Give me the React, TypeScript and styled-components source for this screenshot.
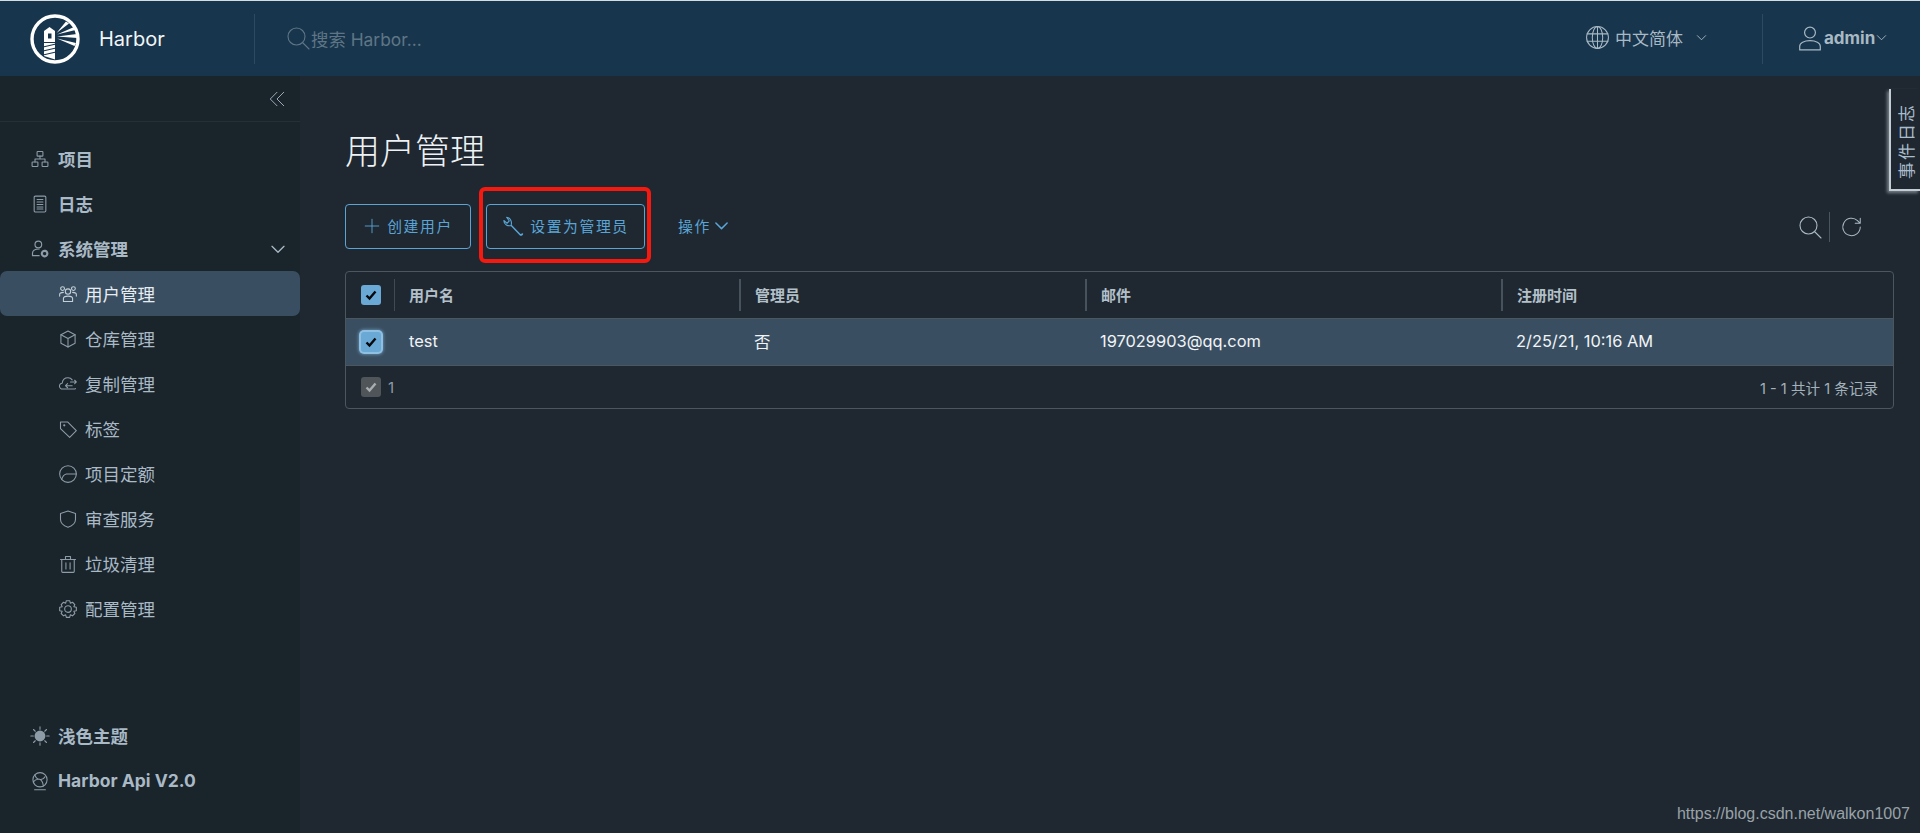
import styled, { createGlobalStyle } from 'styled-components'
import type { ReactNode } from 'react'

const GlobalStyle = createGlobalStyle`
  html, body {
    margin: 0;
    padding: 0;
    height: 100%;
    background: #1f2831;
  }
  * {
    box-sizing: border-box;
  }
  body {
    font-family: Inter, 'Noto Sans CJK SC', sans-serif;
    overflow: hidden;
  }
`

const Page = styled.div`
  width: 1920px;
  height: 833px;
  position: relative;
  display: flex;
  flex-direction: column;
  overflow: hidden;
  border-top: 1px solid #d8dcde;
`
const Header = styled.header`
  height: 75px;
  flex: none;
  display: flex;
  align-items: center;
  background: #17354c;
`
const Brand = styled.div`
  width: 255px;
  height: 50px;
  display: flex;
  align-items: center;
  gap: 19px;
  padding-left: 30px;
  border-right: 1px solid #2c4a60;
  font-size: 20px;
  color: #f2f6f8;
`
const SearchBox = styled.div`
  flex: 1;
  display: flex;
  align-items: center;
  gap: 1px;
  padding-left: 31px;
  padding-bottom: 1px;
  font-size: 17.4px;
  color: #5f7586;
`
const LangMenu = styled.div`
  width: 177px;
  height: 50px;
  display: flex;
  align-items: center;
  gap: 5px;
  padding-bottom: 2px;
  font-size: 17px;
  color: #a9b9c4;
`
const LangCaret = styled.span`
  margin-left: 8px;
  display: flex;
`
const UserMenu = styled.div`
  width: 158px;
  height: 50px;
  display: flex;
  align-items: center;
  gap: 1px;
  padding-left: 34px;
  padding-bottom: 2px;
  border-left: 1px solid #2c4a60;
  font-size: 17px;
  font-weight: 700;
  color: #a9b9c4;
`
const Body = styled.div`
  flex: 1;
  display: flex;
  min-height: 0;
`
const Sidebar = styled.aside`
  width: 300px;
  flex: none;
  display: flex;
  flex-direction: column;
  background: #1a242b;
  padding-bottom: 30px;
`
const CollapseRow = styled.div`
  height: 46px;
  flex: none;
  display: flex;
  justify-content: flex-end;
  align-items: center;
  padding-right: 14px;
  border-bottom: 1px solid #262f36;
  color: #a9b9c4;
`
const NavList = styled.nav`
  flex: 1;
  padding-top: 14px;
`
const NavItem = styled.div<{ $sub?: boolean; $active?: boolean; $bold?: boolean }>`
  height: 45px;
  display: flex;
  align-items: center;
  gap: ${({ $sub }) => ($sub ? '7px' : '8px')};
  padding-left: ${({ $sub }) => ($sub ? '58px' : '30px')};
  padding-right: 14px;
  font-size: 17.5px;
  font-weight: ${({ $bold }) => ($bold ? 700 : 400)};
  color: ${({ $active }) => ($active ? '#e6edf2' : '#a9b9c6')};
  background: ${({ $active }) => ($active ? '#3a4e61' : 'transparent')};
  border-radius: ${({ $active }) => ($active ? '7px' : '0')};
  svg {
    flex: none;
    color: ${({ $active }) => ($active ? '#c4d0d8' : '#8d9ca7')};
  }
`
const NavCaret = styled.span`
  margin-left: auto;
  display: flex;
  svg {
    color: #a9b9c4;
  }
`
const Main = styled.main`
  flex: 1;
  min-width: 0;
  padding: 0 26px 0 45px;
`
const Title = styled.h1`
  margin: 47px 0 0;
  height: 56px;
  font-size: 35px;
  line-height: 56px;
  font-weight: 300;
  color: #eef2f5;
`
const Toolbar = styled.div`
  display: flex;
  align-items: center;
  gap: 15px;
  margin-top: 25px;
  height: 45px;
`
const ActionButton = styled.button<{ $width: number }>`
  width: ${({ $width }) => $width}px;
  height: 45px;
  display: flex;
  align-items: center;
  justify-content: center;
  gap: 6px;
  padding: 0 0 2px;
  background: transparent;
  border: 1px solid #5aa5d6;
  border-radius: 4px;
  font-family: inherit;
  font-size: 14.8px;
  letter-spacing: 1.6px;
  color: #5aa5d6;
`
const PlainAction = styled.div`
  display: flex;
  align-items: center;
  gap: 3px;
  margin-left: 18px;
  padding-bottom: 2px;
  font-size: 14.8px;
  letter-spacing: 1.6px;
  color: #5aa5d6;
`
const ToolIcons = styled.div`
  margin-left: auto;
  display: flex;
  align-items: center;
  margin-right: 31px;
  color: #a9b9c4;
`
const ToolDivider = styled.span`
  width: 1px;
  height: 30px;
  margin: 0 11px 0 7px;
  background: #4a555e;
`
const Table = styled.div`
  margin-top: 22px;
  border: 1px solid #4b565f;
  border-radius: 4px;
`
const Row = styled.div`
  display: grid;
  grid-template-columns: 48px 345px 346px 416px 1fr;
  align-items: center;
`
const HeadRow = styled(Row)`
  height: 47px;
  border-bottom: 1px solid #4b565f;
  font-size: 15px;
  font-weight: 700;
  color: #b3c0c9;
`
const BodyRow = styled(Row)`
  height: 47px;
  background: #3a4e61;
  border-bottom: 1px solid #4b565f;
  font-size: 16.4px;
  color: #f0f4f6;
`
const HeadCell = styled.div<{ $first?: boolean }>`
  height: 32px;
  display: flex;
  align-items: center;
  padding: 0 0 2px 14px;
  border-left: ${({ $first }) => ($first ? '1px solid #3f4a53' : '2px solid #46525c')};
`
const TextCell = styled.div`
  padding: 0 0 2px 15px;
`
const CheckCell = styled.div`
  display: flex;
  justify-content: center;
  padding-left: 1px;
`
const CheckBox = styled.span<{ $muted?: boolean; $glow?: boolean }>`
  width: 20px;
  height: 20px;
  display: flex;
  align-items: center;
  justify-content: center;
  border-radius: 3px;
  background: ${({ $muted }) => ($muted ? '#4f5559' : '#6aa9d6')};
  color: ${({ $muted }) => ($muted ? '#a9aeb1' : '#05090c')};
  box-shadow: ${({ $glow }) => ($glow ? '0 0 0 2px #8fc0e2, 0 0 3px 3px #5d83a0' : 'none')};
`
const FootRow = styled.div`
  height: 42px;
  display: flex;
  align-items: center;
  gap: 7px;
  padding: 0 15px;
  font-size: 15px;
  color: #8e9ba5;
`
const FootInfo = styled.span`
  margin-left: auto;
  font-size: 14.6px;
  color: #a3b1bb;
`
const EventTab = styled.div`
  position: absolute;
  top: 88px;
  right: 0;
  width: 31px;
  height: 102px;
  display: flex;
  align-items: center;
  justify-content: center;
  padding-top: 3px;
  background: #1f2831;
  border-left: 2px solid #c3ccd2;
  border-bottom: 2px solid #c3ccd2;
  box-shadow: -2px 2px 3px rgba(190, 200, 206, 0.55);
  font-size: 17px;
  color: #a9bccb;
`
const EventLabel = styled.span`
  writing-mode: vertical-rl;
  text-orientation: sideways;
  transform: rotate(180deg);
  letter-spacing: 2px;
`
const Highlight = styled.div`
  position: absolute;
  left: 479px;
  top: 186px;
  width: 172px;
  height: 76px;
  border: 4px solid #f5190f;
  border-radius: 6px;
`
const Watermark = styled.div`
  position: absolute;
  right: 10px;
  bottom: 10px;
  font-family: 'Liberation Sans', sans-serif;
  font-size: 16px;
  color: #9aa2a8;
`

const Icon = ({ size = 20, width = 1.3, children }: { size?: number; width?: number; children: ReactNode }) => (
  <svg
    width={size}
    height={size}
    viewBox="0 0 24 24"
    fill="none"
    stroke="currentColor"
    strokeWidth={width}
    strokeLinecap="round"
    strokeLinejoin="round"
  >
    {children}
  </svg>
)

const Logo = () => (
  <svg width="50" height="50" viewBox="0 0 50 50">
    <circle cx="25" cy="25" r="23" fill="#17354c" stroke="#fff" strokeWidth="3.4" />
    <path d="M19.5 13l5.5 4v11H14V17z" fill="#fff" />
    <path d="M18 19.5h3.500v5H18z" fill="#17354c" />
    <path d="M14 29h11v16.500L14 42z" fill="#fff" />
    <path d="M13 33l13-3M13 37l13-3M13 41l13-3" stroke="#17354c" strokeWidth="1.2" />
    <path d="M26.500 19L36 7.500l3 2zM27 20.500L44 13l1.500 3zM27 22.500L47 20l.5 4zM27 24.500L46 29l-1.500 3z" fill="#fff" />
  </svg>
)

const CheckMark = () => (
  <svg width="14" height="14" viewBox="0 0 14 14" fill="none" stroke="currentColor" strokeWidth="2.4">
    <path d="M2.500 7.500l3 3 6-7" />
  </svg>
)

const ProjectIcon = () => (
  <Icon>
    <rect x="8.500" y="3" width="7" height="5.500" rx="0.8" />
    <rect x="2.500" y="15.500" width="7" height="5.500" rx="0.8" />
    <rect x="14.500" y="15.500" width="7" height="5.500" rx="0.8" />
    <path d="M12 8.500V12M6 15.500V12h12v3.500" />
  </Icon>
)
const LogIcon = () => (
  <Icon>
    <rect x="5" y="2.500" width="14" height="19" rx="1.5" />
    <path d="M8.500 6.500h7M8.500 9.500h7M8.500 12.500h7M8.500 15.500h7M8.500 18h7" />
  </Icon>
)
const AdminIcon = () => (
  <Icon width={1.4}>
    <circle cx="10" cy="6.500" r="4" />
    <path d="M11 20H3v-3c0-3 3-5 8-5" />
    <circle cx="17.500" cy="17.500" r="3.300" strokeWidth={2.6} strokeDasharray="2.200 1" />
  </Icon>
)
const UsersIcon = () => (
  <Icon>
    <circle cx="12" cy="9" r="3.200" />
    <path d="M6.500 21v-3.500c0-1.800 2-3 5.500-3s5.500 1.200 5.500 3V21z" />
    <circle cx="5.500" cy="5.500" r="2.300" />
    <circle cx="18.500" cy="5.500" r="2.300" />
    <path d="M2 14.500v-2c0-1.500 1.500-2.500 4.500-2.500M22 14.500v-2c0-1.500-1.500-2.500-4.500-2.500" />
  </Icon>
)
const BoxIcon = () => (
  <Icon>
    <path d="M12 2.500l8.500 4.500v10L12 21.500 3.500 17V7z" />
    <path d="M3.500 7L12 11.500 20.500 7M12 11.500v10" />
  </Icon>
)
const CloudIcon = () => (
  <Icon>
    <path d="M21 17.500c-.5.500-1 .500-2 .500H5.500a3.500 3.500 0 0 1-.5-7c.5-4 3.500-6.500 7-6.500 2 0 4 1 5 2.500" />
    <path d="M17 14h-8M11.500 11.500L9 14l2.500 2.500M15 9.500h7M20 7.500l2 2-2 2" />
  </Icon>
)
const TagIcon = () => (
  <Icon>
    <path d="M3 3.500h8.500L22 14l-8 8L3 11.500z" />
    <circle cx="7.500" cy="7.500" r="0.700" />
  </Icon>
)
const QuotaIcon = () => (
  <Icon>
    <circle cx="12" cy="12" r="10" />
    <path d="M4.500 18.500c1-3.500 3-6 5.500-6.500h12" />
  </Icon>
)
const ShieldIcon = () => (
  <Icon>
    <path d="M12 2.500l9 3v7c0 4.500-4 7.500-9 9.500-5-2-9-5-9-9.500v-7z" />
  </Icon>
)
const TrashIcon = () => (
  <Icon>
    <path d="M4.500 6.500h15V21a1 1 0 0 1-1 1h-13a1 1 0 0 1-1-1zM3 6.500h18M9 6.500V3h6v3.500M9.500 10.500V18M14.500 10.500V18" />
  </Icon>
)
const GearIcon = () => (
  <Icon>
    <circle cx="12" cy="12" r="4" />
    <path d="M10 2h4l.8 3 2.600-1.100 2.800 2.800L19 9.300l3 .7v4l-3 .8 1.200 2.600-2.800 2.800-2.600-1.200-.8 3h-4l-.8-3-2.600 1.200-2.800-2.800L5 14.800 2 14v-4l3-.7-1.200-2.600 2.800-2.800L9.200 5z" />
  </Icon>
)
const SunIcon = () => (
  <Icon size={20}>
    <circle cx="12" cy="12" r="6.500" fill="currentColor" stroke="none" />
    <path d="M12 1v3M12 20v3M1 12h3M20 12h3M4.200 4.200l2.100 2.100M17.700 17.700l2.100 2.100M4.200 19.800l2.100-2.100M17.700 6.300l2.100-2.100" />
  </Icon>
)
const ApiIcon = () => (
  <Icon>
    <circle cx="12" cy="10.500" r="8.500" />
    <path d="M6 4.500c.5 3 2.500 5 5.500 5.500 2.500.5 5 0 6.500-3M4 13c2-2.500 4.500-3.500 7.500-3 2.500 1 4 3 4.500 8M5.500 22.500h13" />
  </Icon>
)
const Chevron = ({ size = 14, width = 1.4 }: { size?: number; width?: number }) => (
  <Icon size={size} width={width}>
    <path d="M3 8l9 9 9-9" />
  </Icon>
)
const SearchIcon = ({ size = 24 }: { size?: number }) => (
  <Icon size={size} width={1.1}>
    <circle cx="10.500" cy="10.500" r="8.500" />
    <path d="M17 17l6 6" />
  </Icon>
)

const subItems = [
  { label: '用户管理', icon: <UsersIcon />, active: true },
  { label: '仓库管理', icon: <BoxIcon /> },
  { label: '复制管理', icon: <CloudIcon /> },
  { label: '标签', icon: <TagIcon /> },
  { label: '项目定额', icon: <QuotaIcon /> },
  { label: '审查服务', icon: <ShieldIcon /> },
  { label: '垃圾清理', icon: <TrashIcon /> },
  { label: '配置管理', icon: <GearIcon /> },
]

export default function App() {
  return (
    <Page>
      <GlobalStyle />
      <Header>
        <Brand>
          <Logo />
          Harbor
        </Brand>
        <SearchBox>
          <SearchIcon />
          搜索 Harbor...
        </SearchBox>
        <LangMenu>
          <Icon size={25} width={1}>
            <circle cx="12" cy="12" r="10.500" />
            <ellipse cx="12" cy="12" rx="5" ry="10.500" />
            <path d="M12 1.500v21M2 8.500h20M2 15.500h20" />
          </Icon>
          中文简体
          <LangCaret>
            <Chevron size={11} width={2} />
          </LangCaret>
        </LangMenu>
        <UserMenu>
          <Icon size={26} width={1.1}>
            <circle cx="12" cy="7" r="5" />
            <path d="M2.500 23v-3.500c0-3 4-5 9.500-5s9.500 2 9.500 5V23z" />
          </Icon>
          admin
          <Chevron size={11} width={2} />
        </UserMenu>
      </Header>
      <Body>
        <Sidebar>
          <CollapseRow>
            <Icon size={18} width={1.2}>
              <path d="M12 3L3 12l9 9M21 3l-9 9 9 9" />
            </Icon>
          </CollapseRow>
          <NavList>
            <NavItem $bold>
              <ProjectIcon />
              项目
            </NavItem>
            <NavItem $bold>
              <LogIcon />
              日志
            </NavItem>
            <NavItem $bold>
              <AdminIcon />
              系统管理
              <NavCaret>
                <Chevron size={16} width={2} />
              </NavCaret>
            </NavItem>
            {subItems.map(item => (
              <NavItem key={item.label} $sub $active={item.active}>
                {item.icon}
                {item.label}
              </NavItem>
            ))}
          </NavList>
          <NavItem $bold>
            <SunIcon />
            浅色主题
          </NavItem>
          <NavItem $bold>
            <ApiIcon />
            Harbor Api V2.0
          </NavItem>
        </Sidebar>
        <Main>
          <Title>用户管理</Title>
          <Toolbar>
            <ActionButton $width={126}>
              <Icon size={18} width={1.2}>
                <path d="M12 3v18M3 12h18" />
              </Icon>
              创建用户
            </ActionButton>
            <ActionButton $width={159}>
              <Icon size={22} width={1.2}>
                <path d="M20 21.500L10 11c1-3.500-.5-8-5-8.500l3 4-2.500 2.500-3.500-3c0 4.500 4.500 6.500 8 5.500l10 10.500c1 .5 2.500-.5 2.500-1.500z" />
              </Icon>
              设置为管理员
            </ActionButton>
            <PlainAction>
              操作
              <Chevron size={15} width={2.4} />
            </PlainAction>
            <ToolIcons>
              <SearchIcon />
              <ToolDivider />
              <Icon size={22} width={1.1}>
                <path d="M21 12a9.500 9.500 0 1 1-3-7l3 3M21 2.500V8h-5.500" />
              </Icon>
            </ToolIcons>
          </Toolbar>
          <Table>
            <HeadRow>
              <CheckCell>
                <CheckBox>
                  <CheckMark />
                </CheckBox>
              </CheckCell>
              <HeadCell $first>用户名</HeadCell>
              <HeadCell>管理员</HeadCell>
              <HeadCell>邮件</HeadCell>
              <HeadCell>注册时间</HeadCell>
            </HeadRow>
            <BodyRow>
              <CheckCell>
                <CheckBox $glow>
                  <CheckMark />
                </CheckBox>
              </CheckCell>
              <TextCell>test</TextCell>
              <TextCell>否</TextCell>
              <TextCell>197029903@qq.com</TextCell>
              <TextCell>2/25/21, 10:16 AM</TextCell>
            </BodyRow>
            <FootRow>
              <CheckBox $muted>
                <CheckMark />
              </CheckBox>
              1
              <FootInfo>1 - 1 共计 1 条记录</FootInfo>
            </FootRow>
          </Table>
        </Main>
      </Body>
      <EventTab>
        <EventLabel>事件日志</EventLabel>
      </EventTab>
      <Highlight />
      <Watermark>https://blog.csdn.net/walkon1007</Watermark>
    </Page>
  )
}
